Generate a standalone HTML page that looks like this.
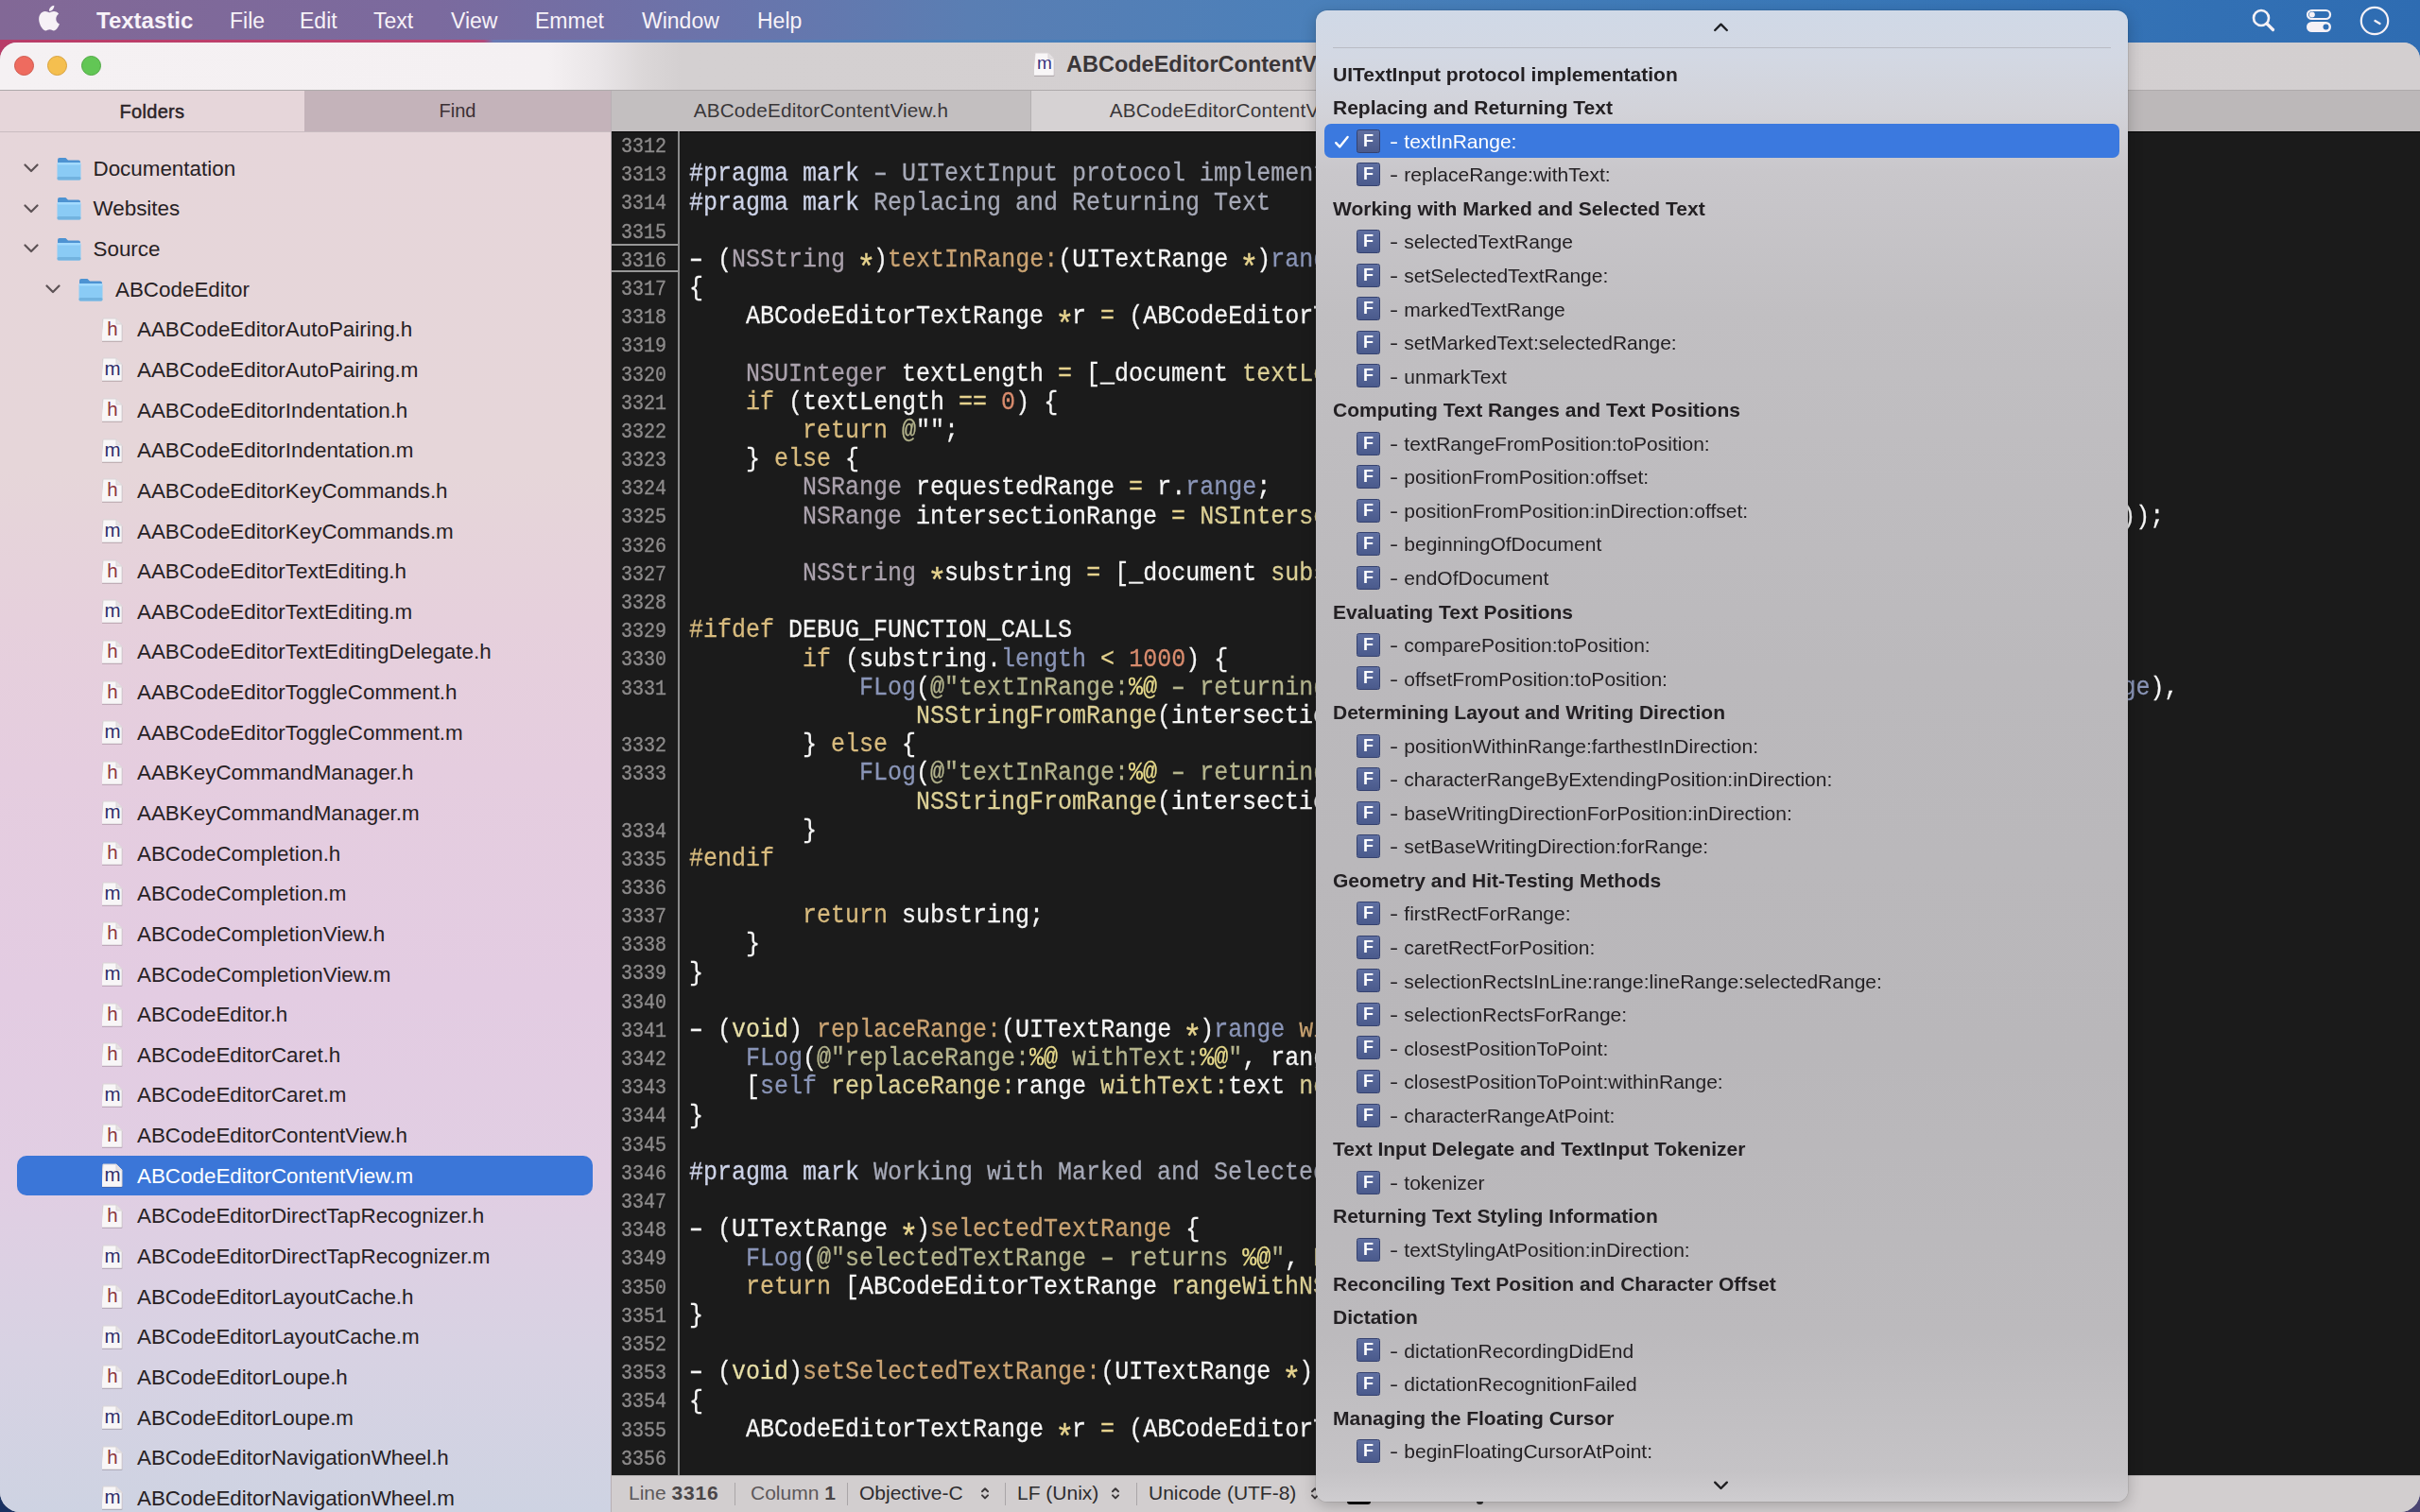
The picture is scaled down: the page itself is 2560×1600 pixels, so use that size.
<!DOCTYPE html><html><head><meta charset='utf-8'><style>
*{margin:0;padding:0;box-sizing:border-box}
html,body{width:2560px;height:1600px;overflow:hidden;background:linear-gradient(90deg,#1a3262,#4a4472)}
body{position:relative;font-family:"Liberation Sans", sans-serif}
.a{position:absolute}
.t{position:absolute;white-space:pre;line-height:1}
.mi{position:absolute;top:10.5px;font-size:23px;color:#f7f2f8;white-space:pre;line-height:1}
.tl{position:absolute;top:58.5px;width:21px;height:21px;border-radius:50%}
.rt{position:absolute;font-size:22.4px;color:#272124;white-space:pre;line-height:1}
.ln{position:absolute;left:647px;width:58px;text-align:right;font-family:"Liberation Mono", monospace;font-size:20px;color:#8e8c8c;white-space:pre;line-height:1;transform:scaleY(1.12);transform-origin:0 15.3px;-webkit-text-stroke:0.3px #8e8c8c}
.cl{position:absolute;left:729px;font-family:"Liberation Mono", monospace;font-size:25px;color:#f6f6f6;white-space:pre;line-height:1;transform:scaleY(1.08);transform-origin:0 19.15px;-webkit-text-stroke:0.25px currentColor}
.ast{font-style:normal;display:inline-block;transform:translateY(9.5px) scale(1.35)}
.hy{font-style:normal;display:inline-block;transform:scaleX(1.55)}
.ph{position:absolute;left:1410px;font-size:21px;font-weight:bold;color:#232023;white-space:pre;line-height:1}
.pi{position:absolute;left:1470px;font-size:21px;color:#242124;white-space:pre;line-height:1}
.fb{position:absolute;left:1435px;width:25px;height:25px;border-radius:2.5px;background:linear-gradient(180deg,#5f6fa1,#4a5a8c);border:1px solid #34416f;color:#fff;font-size:18px;font-weight:bold;text-align:center;line-height:23px}
</style></head><body>
<div class='a' style='left:0;top:0;width:2560px;height:70px;background:linear-gradient(90deg,#b83c68 0px,#c2426e 500px,#b04a7c 512px,#6a7ab4 522px,#4a80ba 1000px,#3f7ab9 1400px,#2f6db3 2560px)'></div>
<div class='a' style='left:0;top:0;width:2560px;height:41.5px;background:linear-gradient(90deg,#826896 0%,#7b6a9e 18%,#6a74ab 30%,#5a7eb3 40%,#4a80ba 55%,#3a78b8 75%,#2e6cb2 100%)'></div>
<svg class='a' style='left:38px;top:4px' width='26' height='30' viewBox='0 0 26 30'><path fill='#f6f1f6' d='M21.3 15.9c0-3.4 2.8-5 2.9-5.1-1.6-2.3-4-2.6-4.9-2.7-2.1-.2-4 1.2-5.1 1.2-1 0-2.7-1.2-4.4-1.2C7.5 8.2 5.4 9.5 4.3 11.5c-2.4 4.1-.6 10.2 1.7 13.5 1.1 1.6 2.5 3.5 4.2 3.4 1.7-.1 2.300-1.1 4.4-1.1 2 0 2.6 1.1 4.4 1.1 1.8 0 3-1.700 4.1-3.3 1.3-1.9 1.8-3.7 1.8-3.8 0 0-3.6-1.4-3.6-5.4zM17.9 5.9c.9-1.1 1.6-2.7 1.4-4.2-1.300.1-3 .9-3.9 2-.9 1-1.6 2.6-1.4 4.1 1.5.1 3-.8 3.9-1.9z'/></svg>
<div class='mi' style='left:102px;font-weight:bold;font-size:24px;top:9.5px;'>Textastic</div>
<div class='mi' style='left:243px;'>File</div>
<div class='mi' style='left:317px;'>Edit</div>
<div class='mi' style='left:395px;'>Text</div>
<div class='mi' style='left:477px;'>View</div>
<div class='mi' style='left:566px;'>Emmet</div>
<div class='mi' style='left:679px;'>Window</div>
<div class='mi' style='left:801px;'>Help</div>
<svg class='a' style='left:2380px;top:7px' width='30' height='30' viewBox='0 0 30 30'><circle cx='12' cy='12' r='8' fill='none' stroke='#f6f1f6' stroke-width='2.6'/><path d='M18 18L24.5 24.5' stroke='#f6f1f6' stroke-width='3.2' stroke-linecap='round'/></svg>
<svg class='a' style='left:2438px;top:8px' width='32' height='28' viewBox='0 0 32 28'><rect x='3' y='3' width='24' height='9' rx='4.5' fill='none' stroke='#f6f1f6' stroke-width='2.2'/><circle cx='7.8' cy='7.5' r='3' fill='#f6f1f6'/><rect x='2' y='15' width='26' height='11' rx='5.5' fill='#f6f1f6'/><circle cx='22.5' cy='20.5' r='3' fill='#2f6db3'/></svg>
<svg class='a' style='left:2495px;top:5px' width='34' height='34' viewBox='0 0 34 34'><circle cx='17' cy='17' r='14.2' fill='none' stroke='#f6f1f6' stroke-width='2.2'/><path d='M17.5 17L22.5 20' stroke='#f6f1f6' stroke-width='2.4' stroke-linecap='round'/></svg>
<div class='a' style='left:0;top:44.5px;width:2560px;height:1555.5px;border-radius:18px 18px 21px 21px;overflow:hidden;background:#d3cfd0'>
<div class='a' style='left:0;top:0;width:2560px;height:50px;background:linear-gradient(90deg,#f5f1f3 0px,#f4f0f2 580px,#e9e5e7 635px,#dbd7d8 680px,#d4d0d1 720px,#d3cfd0 2560px)'></div>
<div class='a' style='left:0;top:50px;width:2560px;height:1px;background:#aeaaab'></div>
<div class='a' style='left:0;top:51px;width:646px;height:1520px;background:linear-gradient(180deg,#e6d6da 0px,#e6d6d9 400px,#e6d0dc 560px,#e5cddf 720px,#e3cce2 950px,#e1cee3 1150px,#d8d2e3 1330px,#cdd3e2 1520px)'></div>
<div class='a' style='left:646px;top:51px;width:1px;height:1520px;background:#b8b0b4'></div>
<div class='a' style='left:322px;top:51px;width:324px;height:44px;background:#c4b3ba'></div>
<div class='a' style='left:0;top:94.5px;width:646px;height:1px;background:#c9bcc1'></div>
</div>
<div class='tl' style='left:14.5px;background:#ee6b5f;border:1px solid #d0574c'></div>
<div class='tl' style='left:50px;background:#f5bf4f;border:1px solid #d8a13b'></div>
<div class='tl' style='left:85.5px;background:#62c655;border:1px solid #4fa843'></div>
<svg class='a' style='left:1094px;top:55px;filter:drop-shadow(0 1px 0.6px rgba(60,40,50,.22))' width='22' height='25' viewBox='0 0 22 25'><path d='M1 1h14l6 6v17a1 1 0 0 1-1 1h-20a1 1 0 0 1-1-1z' fill='#f8f6f7' stroke='#d9d4d6' stroke-width='1'/><path d='M15 1v6h6' fill='#e6e2e4' stroke='#d9d4d6' stroke-width='1'/></svg><div class='t' style='left:1094px;width:22px;text-align:center;top:57px;font-size:19px;color:#3a3480'>m</div>
<div class='t' style='left:1128px;top:56.5px;font-size:23.5px;font-weight:bold;color:#3a3638'>ABCodeEditorContentView.m</div>
<div class='t' style='left:0;width:322px;text-align:center;top:107.5px;font-size:20px;letter-spacing:0.3px;-webkit-text-stroke:0.45px #2a2226;color:#2a2226'>Folders</div>
<div class='t' style='left:322px;width:324px;text-align:center;top:107px;font-size:20px;color:#3a3035'>Find</div>
<svg class='a' style='left:24.5px;top:173.2px' width='16' height='10' viewBox='0 0 16 10'><path d='M1.5 1.5L8 8l6.5-6.5' fill='none' stroke='#5c5255' stroke-width='2.2' stroke-linecap='round' stroke-linejoin='round'/></svg>
<svg class='a' style='left:60px;top:165.7px' width='26' height='25' viewBox='0 0 26 25'><path d='M1 3a2 2 0 0 1 2-2h6.5l2.5 2.5h11a2 2 0 0 1 2 2v3H1z' fill='#4d93d2'/><rect x='0.5' y='6' width='25' height='18.5' rx='2' fill='#8acbf5'/><rect x='0.5' y='6' width='25' height='2.5' rx='1' fill='#a3dbff'/><rect x='0.5' y='21' width='25' height='3.5' rx='1.5' fill='#72b3df'/></svg>
<div class='rt' style='left:98.5px;top:167.7px;color:#272124'>Documentation</div>
<svg class='a' style='left:24.5px;top:215.83999999999997px' width='16' height='10' viewBox='0 0 16 10'><path d='M1.5 1.5L8 8l6.5-6.5' fill='none' stroke='#5c5255' stroke-width='2.2' stroke-linecap='round' stroke-linejoin='round'/></svg>
<svg class='a' style='left:60px;top:208.33999999999997px' width='26' height='25' viewBox='0 0 26 25'><path d='M1 3a2 2 0 0 1 2-2h6.5l2.5 2.5h11a2 2 0 0 1 2 2v3H1z' fill='#4d93d2'/><rect x='0.5' y='6' width='25' height='18.5' rx='2' fill='#8acbf5'/><rect x='0.5' y='6' width='25' height='2.5' rx='1' fill='#a3dbff'/><rect x='0.5' y='21' width='25' height='3.5' rx='1.5' fill='#72b3df'/></svg>
<div class='rt' style='left:98.5px;top:210.3px;color:#272124'>Websites</div>
<svg class='a' style='left:24.5px;top:258.48px' width='16' height='10' viewBox='0 0 16 10'><path d='M1.5 1.5L8 8l6.5-6.5' fill='none' stroke='#5c5255' stroke-width='2.2' stroke-linecap='round' stroke-linejoin='round'/></svg>
<svg class='a' style='left:60px;top:250.98000000000002px' width='26' height='25' viewBox='0 0 26 25'><path d='M1 3a2 2 0 0 1 2-2h6.5l2.5 2.5h11a2 2 0 0 1 2 2v3H1z' fill='#4d93d2'/><rect x='0.5' y='6' width='25' height='18.5' rx='2' fill='#8acbf5'/><rect x='0.5' y='6' width='25' height='2.5' rx='1' fill='#a3dbff'/><rect x='0.5' y='21' width='25' height='3.5' rx='1.5' fill='#72b3df'/></svg>
<div class='rt' style='left:98.5px;top:253.0px;color:#272124'>Source</div>
<svg class='a' style='left:48.0px;top:301.12px' width='16' height='10' viewBox='0 0 16 10'><path d='M1.5 1.5L8 8l6.5-6.5' fill='none' stroke='#5c5255' stroke-width='2.2' stroke-linecap='round' stroke-linejoin='round'/></svg>
<svg class='a' style='left:83px;top:293.62px' width='26' height='25' viewBox='0 0 26 25'><path d='M1 3a2 2 0 0 1 2-2h6.5l2.5 2.5h11a2 2 0 0 1 2 2v3H1z' fill='#4d93d2'/><rect x='0.5' y='6' width='25' height='18.5' rx='2' fill='#8acbf5'/><rect x='0.5' y='6' width='25' height='2.5' rx='1' fill='#a3dbff'/><rect x='0.5' y='21' width='25' height='3.5' rx='1.5' fill='#72b3df'/></svg>
<div class='rt' style='left:122.0px;top:295.6px;color:#272124'>ABCodeEditor</div>
<svg class='a' style='left:108px;top:335.8px;filter:drop-shadow(0 1px 0.6px rgba(60,40,50,.22))' width='22' height='25' viewBox='0 0 22 25'><path d='M1 1h14l6 6v17a1 1 0 0 1-1 1h-20a1 1 0 0 1-1-1z' fill='#f8f6f7' stroke='#d9d4d6' stroke-width='1'/><path d='M15 1v6h6' fill='#e6e2e4' stroke='#d9d4d6' stroke-width='1'/></svg><div class='t' style='left:108px;width:22px;text-align:center;top:337.8px;font-size:20.5px;color:#8c3540'>h</div>
<div class='rt' style='left:145px;top:338.3px;color:#272124'>AABCodeEditorAutoPairing.h</div>
<svg class='a' style='left:108px;top:378.4px;filter:drop-shadow(0 1px 0.6px rgba(60,40,50,.22))' width='22' height='25' viewBox='0 0 22 25'><path d='M1 1h14l6 6v17a1 1 0 0 1-1 1h-20a1 1 0 0 1-1-1z' fill='#f8f6f7' stroke='#d9d4d6' stroke-width='1'/><path d='M15 1v6h6' fill='#e6e2e4' stroke='#d9d4d6' stroke-width='1'/></svg><div class='t' style='left:108px;width:22px;text-align:center;top:380.4px;font-size:20.5px;color:#2f2e6a'>m</div>
<div class='rt' style='left:145px;top:380.9px;color:#272124'>AABCodeEditorAutoPairing.m</div>
<svg class='a' style='left:108px;top:421.0px;filter:drop-shadow(0 1px 0.6px rgba(60,40,50,.22))' width='22' height='25' viewBox='0 0 22 25'><path d='M1 1h14l6 6v17a1 1 0 0 1-1 1h-20a1 1 0 0 1-1-1z' fill='#f8f6f7' stroke='#d9d4d6' stroke-width='1'/><path d='M15 1v6h6' fill='#e6e2e4' stroke='#d9d4d6' stroke-width='1'/></svg><div class='t' style='left:108px;width:22px;text-align:center;top:423.0px;font-size:20.5px;color:#8c3540'>h</div>
<div class='rt' style='left:145px;top:423.5px;color:#272124'>AABCodeEditorIndentation.h</div>
<svg class='a' style='left:108px;top:463.7px;filter:drop-shadow(0 1px 0.6px rgba(60,40,50,.22))' width='22' height='25' viewBox='0 0 22 25'><path d='M1 1h14l6 6v17a1 1 0 0 1-1 1h-20a1 1 0 0 1-1-1z' fill='#f8f6f7' stroke='#d9d4d6' stroke-width='1'/><path d='M15 1v6h6' fill='#e6e2e4' stroke='#d9d4d6' stroke-width='1'/></svg><div class='t' style='left:108px;width:22px;text-align:center;top:465.7px;font-size:20.5px;color:#2f2e6a'>m</div>
<div class='rt' style='left:145px;top:466.2px;color:#272124'>AABCodeEditorIndentation.m</div>
<svg class='a' style='left:108px;top:506.3px;filter:drop-shadow(0 1px 0.6px rgba(60,40,50,.22))' width='22' height='25' viewBox='0 0 22 25'><path d='M1 1h14l6 6v17a1 1 0 0 1-1 1h-20a1 1 0 0 1-1-1z' fill='#f8f6f7' stroke='#d9d4d6' stroke-width='1'/><path d='M15 1v6h6' fill='#e6e2e4' stroke='#d9d4d6' stroke-width='1'/></svg><div class='t' style='left:108px;width:22px;text-align:center;top:508.3px;font-size:20.5px;color:#8c3540'>h</div>
<div class='rt' style='left:145px;top:508.8px;color:#272124'>AABCodeEditorKeyCommands.h</div>
<svg class='a' style='left:108px;top:549.0px;filter:drop-shadow(0 1px 0.6px rgba(60,40,50,.22))' width='22' height='25' viewBox='0 0 22 25'><path d='M1 1h14l6 6v17a1 1 0 0 1-1 1h-20a1 1 0 0 1-1-1z' fill='#f8f6f7' stroke='#d9d4d6' stroke-width='1'/><path d='M15 1v6h6' fill='#e6e2e4' stroke='#d9d4d6' stroke-width='1'/></svg><div class='t' style='left:108px;width:22px;text-align:center;top:551.0px;font-size:20.5px;color:#2f2e6a'>m</div>
<div class='rt' style='left:145px;top:551.5px;color:#272124'>AABCodeEditorKeyCommands.m</div>
<svg class='a' style='left:108px;top:591.6px;filter:drop-shadow(0 1px 0.6px rgba(60,40,50,.22))' width='22' height='25' viewBox='0 0 22 25'><path d='M1 1h14l6 6v17a1 1 0 0 1-1 1h-20a1 1 0 0 1-1-1z' fill='#f8f6f7' stroke='#d9d4d6' stroke-width='1'/><path d='M15 1v6h6' fill='#e6e2e4' stroke='#d9d4d6' stroke-width='1'/></svg><div class='t' style='left:108px;width:22px;text-align:center;top:593.6px;font-size:20.5px;color:#8c3540'>h</div>
<div class='rt' style='left:145px;top:594.1px;color:#272124'>AABCodeEditorTextEditing.h</div>
<svg class='a' style='left:108px;top:634.2px;filter:drop-shadow(0 1px 0.6px rgba(60,40,50,.22))' width='22' height='25' viewBox='0 0 22 25'><path d='M1 1h14l6 6v17a1 1 0 0 1-1 1h-20a1 1 0 0 1-1-1z' fill='#f8f6f7' stroke='#d9d4d6' stroke-width='1'/><path d='M15 1v6h6' fill='#e6e2e4' stroke='#d9d4d6' stroke-width='1'/></svg><div class='t' style='left:108px;width:22px;text-align:center;top:636.2px;font-size:20.5px;color:#2f2e6a'>m</div>
<div class='rt' style='left:145px;top:636.7px;color:#272124'>AABCodeEditorTextEditing.m</div>
<svg class='a' style='left:108px;top:676.9px;filter:drop-shadow(0 1px 0.6px rgba(60,40,50,.22))' width='22' height='25' viewBox='0 0 22 25'><path d='M1 1h14l6 6v17a1 1 0 0 1-1 1h-20a1 1 0 0 1-1-1z' fill='#f8f6f7' stroke='#d9d4d6' stroke-width='1'/><path d='M15 1v6h6' fill='#e6e2e4' stroke='#d9d4d6' stroke-width='1'/></svg><div class='t' style='left:108px;width:22px;text-align:center;top:678.9px;font-size:20.5px;color:#8c3540'>h</div>
<div class='rt' style='left:145px;top:679.4px;color:#272124'>AABCodeEditorTextEditingDelegate.h</div>
<svg class='a' style='left:108px;top:719.5px;filter:drop-shadow(0 1px 0.6px rgba(60,40,50,.22))' width='22' height='25' viewBox='0 0 22 25'><path d='M1 1h14l6 6v17a1 1 0 0 1-1 1h-20a1 1 0 0 1-1-1z' fill='#f8f6f7' stroke='#d9d4d6' stroke-width='1'/><path d='M15 1v6h6' fill='#e6e2e4' stroke='#d9d4d6' stroke-width='1'/></svg><div class='t' style='left:108px;width:22px;text-align:center;top:721.5px;font-size:20.5px;color:#8c3540'>h</div>
<div class='rt' style='left:145px;top:722.0px;color:#272124'>AABCodeEditorToggleComment.h</div>
<svg class='a' style='left:108px;top:762.2px;filter:drop-shadow(0 1px 0.6px rgba(60,40,50,.22))' width='22' height='25' viewBox='0 0 22 25'><path d='M1 1h14l6 6v17a1 1 0 0 1-1 1h-20a1 1 0 0 1-1-1z' fill='#f8f6f7' stroke='#d9d4d6' stroke-width='1'/><path d='M15 1v6h6' fill='#e6e2e4' stroke='#d9d4d6' stroke-width='1'/></svg><div class='t' style='left:108px;width:22px;text-align:center;top:764.2px;font-size:20.5px;color:#2f2e6a'>m</div>
<div class='rt' style='left:145px;top:764.7px;color:#272124'>AABCodeEditorToggleComment.m</div>
<svg class='a' style='left:108px;top:804.8px;filter:drop-shadow(0 1px 0.6px rgba(60,40,50,.22))' width='22' height='25' viewBox='0 0 22 25'><path d='M1 1h14l6 6v17a1 1 0 0 1-1 1h-20a1 1 0 0 1-1-1z' fill='#f8f6f7' stroke='#d9d4d6' stroke-width='1'/><path d='M15 1v6h6' fill='#e6e2e4' stroke='#d9d4d6' stroke-width='1'/></svg><div class='t' style='left:108px;width:22px;text-align:center;top:806.8px;font-size:20.5px;color:#8c3540'>h</div>
<div class='rt' style='left:145px;top:807.3px;color:#272124'>AABKeyCommandManager.h</div>
<svg class='a' style='left:108px;top:847.4px;filter:drop-shadow(0 1px 0.6px rgba(60,40,50,.22))' width='22' height='25' viewBox='0 0 22 25'><path d='M1 1h14l6 6v17a1 1 0 0 1-1 1h-20a1 1 0 0 1-1-1z' fill='#f8f6f7' stroke='#d9d4d6' stroke-width='1'/><path d='M15 1v6h6' fill='#e6e2e4' stroke='#d9d4d6' stroke-width='1'/></svg><div class='t' style='left:108px;width:22px;text-align:center;top:849.4px;font-size:20.5px;color:#2f2e6a'>m</div>
<div class='rt' style='left:145px;top:849.9px;color:#272124'>AABKeyCommandManager.m</div>
<svg class='a' style='left:108px;top:890.1px;filter:drop-shadow(0 1px 0.6px rgba(60,40,50,.22))' width='22' height='25' viewBox='0 0 22 25'><path d='M1 1h14l6 6v17a1 1 0 0 1-1 1h-20a1 1 0 0 1-1-1z' fill='#f8f6f7' stroke='#d9d4d6' stroke-width='1'/><path d='M15 1v6h6' fill='#e6e2e4' stroke='#d9d4d6' stroke-width='1'/></svg><div class='t' style='left:108px;width:22px;text-align:center;top:892.1px;font-size:20.5px;color:#8c3540'>h</div>
<div class='rt' style='left:145px;top:892.6px;color:#272124'>ABCodeCompletion.h</div>
<svg class='a' style='left:108px;top:932.7px;filter:drop-shadow(0 1px 0.6px rgba(60,40,50,.22))' width='22' height='25' viewBox='0 0 22 25'><path d='M1 1h14l6 6v17a1 1 0 0 1-1 1h-20a1 1 0 0 1-1-1z' fill='#f8f6f7' stroke='#d9d4d6' stroke-width='1'/><path d='M15 1v6h6' fill='#e6e2e4' stroke='#d9d4d6' stroke-width='1'/></svg><div class='t' style='left:108px;width:22px;text-align:center;top:934.7px;font-size:20.5px;color:#2f2e6a'>m</div>
<div class='rt' style='left:145px;top:935.2px;color:#272124'>ABCodeCompletion.m</div>
<svg class='a' style='left:108px;top:975.4px;filter:drop-shadow(0 1px 0.6px rgba(60,40,50,.22))' width='22' height='25' viewBox='0 0 22 25'><path d='M1 1h14l6 6v17a1 1 0 0 1-1 1h-20a1 1 0 0 1-1-1z' fill='#f8f6f7' stroke='#d9d4d6' stroke-width='1'/><path d='M15 1v6h6' fill='#e6e2e4' stroke='#d9d4d6' stroke-width='1'/></svg><div class='t' style='left:108px;width:22px;text-align:center;top:977.4px;font-size:20.5px;color:#8c3540'>h</div>
<div class='rt' style='left:145px;top:977.9px;color:#272124'>ABCodeCompletionView.h</div>
<svg class='a' style='left:108px;top:1018.0px;filter:drop-shadow(0 1px 0.6px rgba(60,40,50,.22))' width='22' height='25' viewBox='0 0 22 25'><path d='M1 1h14l6 6v17a1 1 0 0 1-1 1h-20a1 1 0 0 1-1-1z' fill='#f8f6f7' stroke='#d9d4d6' stroke-width='1'/><path d='M15 1v6h6' fill='#e6e2e4' stroke='#d9d4d6' stroke-width='1'/></svg><div class='t' style='left:108px;width:22px;text-align:center;top:1020.0px;font-size:20.5px;color:#2f2e6a'>m</div>
<div class='rt' style='left:145px;top:1020.5px;color:#272124'>ABCodeCompletionView.m</div>
<svg class='a' style='left:108px;top:1060.6px;filter:drop-shadow(0 1px 0.6px rgba(60,40,50,.22))' width='22' height='25' viewBox='0 0 22 25'><path d='M1 1h14l6 6v17a1 1 0 0 1-1 1h-20a1 1 0 0 1-1-1z' fill='#f8f6f7' stroke='#d9d4d6' stroke-width='1'/><path d='M15 1v6h6' fill='#e6e2e4' stroke='#d9d4d6' stroke-width='1'/></svg><div class='t' style='left:108px;width:22px;text-align:center;top:1062.6px;font-size:20.5px;color:#8c3540'>h</div>
<div class='rt' style='left:145px;top:1063.1px;color:#272124'>ABCodeEditor.h</div>
<svg class='a' style='left:108px;top:1103.3px;filter:drop-shadow(0 1px 0.6px rgba(60,40,50,.22))' width='22' height='25' viewBox='0 0 22 25'><path d='M1 1h14l6 6v17a1 1 0 0 1-1 1h-20a1 1 0 0 1-1-1z' fill='#f8f6f7' stroke='#d9d4d6' stroke-width='1'/><path d='M15 1v6h6' fill='#e6e2e4' stroke='#d9d4d6' stroke-width='1'/></svg><div class='t' style='left:108px;width:22px;text-align:center;top:1105.3px;font-size:20.5px;color:#8c3540'>h</div>
<div class='rt' style='left:145px;top:1105.8px;color:#272124'>ABCodeEditorCaret.h</div>
<svg class='a' style='left:108px;top:1145.9px;filter:drop-shadow(0 1px 0.6px rgba(60,40,50,.22))' width='22' height='25' viewBox='0 0 22 25'><path d='M1 1h14l6 6v17a1 1 0 0 1-1 1h-20a1 1 0 0 1-1-1z' fill='#f8f6f7' stroke='#d9d4d6' stroke-width='1'/><path d='M15 1v6h6' fill='#e6e2e4' stroke='#d9d4d6' stroke-width='1'/></svg><div class='t' style='left:108px;width:22px;text-align:center;top:1147.9px;font-size:20.5px;color:#2f2e6a'>m</div>
<div class='rt' style='left:145px;top:1148.4px;color:#272124'>ABCodeEditorCaret.m</div>
<svg class='a' style='left:108px;top:1188.6px;filter:drop-shadow(0 1px 0.6px rgba(60,40,50,.22))' width='22' height='25' viewBox='0 0 22 25'><path d='M1 1h14l6 6v17a1 1 0 0 1-1 1h-20a1 1 0 0 1-1-1z' fill='#f8f6f7' stroke='#d9d4d6' stroke-width='1'/><path d='M15 1v6h6' fill='#e6e2e4' stroke='#d9d4d6' stroke-width='1'/></svg><div class='t' style='left:108px;width:22px;text-align:center;top:1190.6px;font-size:20.5px;color:#8c3540'>h</div>
<div class='rt' style='left:145px;top:1191.1px;color:#272124'>ABCodeEditorContentView.h</div>
<div class='a' style='left:18px;top:1222.5px;width:609px;height:42.5px;border-radius:10px;background:#3b76d8'></div>
<svg class='a' style='left:108px;top:1231.2px;filter:drop-shadow(0 1px 0.6px rgba(60,40,50,.22))' width='22' height='25' viewBox='0 0 22 25'><path d='M1 1h14l6 6v17a1 1 0 0 1-1 1h-20a1 1 0 0 1-1-1z' fill='#f8f6f7' stroke='#d9d4d6' stroke-width='1'/><path d='M15 1v6h6' fill='#e6e2e4' stroke='#d9d4d6' stroke-width='1'/></svg><div class='t' style='left:108px;width:22px;text-align:center;top:1233.2px;font-size:20.5px;color:#2f2e6a'>m</div>
<div class='rt' style='left:145px;top:1233.7px;color:#ffffff'>ABCodeEditorContentView.m</div>
<svg class='a' style='left:108px;top:1273.8px;filter:drop-shadow(0 1px 0.6px rgba(60,40,50,.22))' width='22' height='25' viewBox='0 0 22 25'><path d='M1 1h14l6 6v17a1 1 0 0 1-1 1h-20a1 1 0 0 1-1-1z' fill='#f8f6f7' stroke='#d9d4d6' stroke-width='1'/><path d='M15 1v6h6' fill='#e6e2e4' stroke='#d9d4d6' stroke-width='1'/></svg><div class='t' style='left:108px;width:22px;text-align:center;top:1275.8px;font-size:20.5px;color:#8c3540'>h</div>
<div class='rt' style='left:145px;top:1276.3px;color:#272124'>ABCodeEditorDirectTapRecognizer.h</div>
<svg class='a' style='left:108px;top:1316.5px;filter:drop-shadow(0 1px 0.6px rgba(60,40,50,.22))' width='22' height='25' viewBox='0 0 22 25'><path d='M1 1h14l6 6v17a1 1 0 0 1-1 1h-20a1 1 0 0 1-1-1z' fill='#f8f6f7' stroke='#d9d4d6' stroke-width='1'/><path d='M15 1v6h6' fill='#e6e2e4' stroke='#d9d4d6' stroke-width='1'/></svg><div class='t' style='left:108px;width:22px;text-align:center;top:1318.5px;font-size:20.5px;color:#2f2e6a'>m</div>
<div class='rt' style='left:145px;top:1319.0px;color:#272124'>ABCodeEditorDirectTapRecognizer.m</div>
<svg class='a' style='left:108px;top:1359.1px;filter:drop-shadow(0 1px 0.6px rgba(60,40,50,.22))' width='22' height='25' viewBox='0 0 22 25'><path d='M1 1h14l6 6v17a1 1 0 0 1-1 1h-20a1 1 0 0 1-1-1z' fill='#f8f6f7' stroke='#d9d4d6' stroke-width='1'/><path d='M15 1v6h6' fill='#e6e2e4' stroke='#d9d4d6' stroke-width='1'/></svg><div class='t' style='left:108px;width:22px;text-align:center;top:1361.1px;font-size:20.5px;color:#8c3540'>h</div>
<div class='rt' style='left:145px;top:1361.6px;color:#272124'>ABCodeEditorLayoutCache.h</div>
<svg class='a' style='left:108px;top:1401.8px;filter:drop-shadow(0 1px 0.6px rgba(60,40,50,.22))' width='22' height='25' viewBox='0 0 22 25'><path d='M1 1h14l6 6v17a1 1 0 0 1-1 1h-20a1 1 0 0 1-1-1z' fill='#f8f6f7' stroke='#d9d4d6' stroke-width='1'/><path d='M15 1v6h6' fill='#e6e2e4' stroke='#d9d4d6' stroke-width='1'/></svg><div class='t' style='left:108px;width:22px;text-align:center;top:1403.8px;font-size:20.5px;color:#2f2e6a'>m</div>
<div class='rt' style='left:145px;top:1404.3px;color:#272124'>ABCodeEditorLayoutCache.m</div>
<svg class='a' style='left:108px;top:1444.4px;filter:drop-shadow(0 1px 0.6px rgba(60,40,50,.22))' width='22' height='25' viewBox='0 0 22 25'><path d='M1 1h14l6 6v17a1 1 0 0 1-1 1h-20a1 1 0 0 1-1-1z' fill='#f8f6f7' stroke='#d9d4d6' stroke-width='1'/><path d='M15 1v6h6' fill='#e6e2e4' stroke='#d9d4d6' stroke-width='1'/></svg><div class='t' style='left:108px;width:22px;text-align:center;top:1446.4px;font-size:20.5px;color:#8c3540'>h</div>
<div class='rt' style='left:145px;top:1446.9px;color:#272124'>ABCodeEditorLoupe.h</div>
<svg class='a' style='left:108px;top:1487.0px;filter:drop-shadow(0 1px 0.6px rgba(60,40,50,.22))' width='22' height='25' viewBox='0 0 22 25'><path d='M1 1h14l6 6v17a1 1 0 0 1-1 1h-20a1 1 0 0 1-1-1z' fill='#f8f6f7' stroke='#d9d4d6' stroke-width='1'/><path d='M15 1v6h6' fill='#e6e2e4' stroke='#d9d4d6' stroke-width='1'/></svg><div class='t' style='left:108px;width:22px;text-align:center;top:1489.0px;font-size:20.5px;color:#2f2e6a'>m</div>
<div class='rt' style='left:145px;top:1489.5px;color:#272124'>ABCodeEditorLoupe.m</div>
<svg class='a' style='left:108px;top:1529.7px;filter:drop-shadow(0 1px 0.6px rgba(60,40,50,.22))' width='22' height='25' viewBox='0 0 22 25'><path d='M1 1h14l6 6v17a1 1 0 0 1-1 1h-20a1 1 0 0 1-1-1z' fill='#f8f6f7' stroke='#d9d4d6' stroke-width='1'/><path d='M15 1v6h6' fill='#e6e2e4' stroke='#d9d4d6' stroke-width='1'/></svg><div class='t' style='left:108px;width:22px;text-align:center;top:1531.7px;font-size:20.5px;color:#8c3540'>h</div>
<div class='rt' style='left:145px;top:1532.2px;color:#272124'>ABCodeEditorNavigationWheel.h</div>
<svg class='a' style='left:108px;top:1572.3px;filter:drop-shadow(0 1px 0.6px rgba(60,40,50,.22))' width='22' height='25' viewBox='0 0 22 25'><path d='M1 1h14l6 6v17a1 1 0 0 1-1 1h-20a1 1 0 0 1-1-1z' fill='#f8f6f7' stroke='#d9d4d6' stroke-width='1'/><path d='M15 1v6h6' fill='#e6e2e4' stroke='#d9d4d6' stroke-width='1'/></svg><div class='t' style='left:108px;width:22px;text-align:center;top:1574.3px;font-size:20.5px;color:#2f2e6a'>m</div>
<div class='rt' style='left:145px;top:1574.8px;color:#272124'>ABCodeEditorNavigationWheel.m</div>
<div class='a' style='left:647px;top:139px;width:1913px;height:1422px;background:#1b1b1b'></div>
<div class='a' style='left:647px;top:95.5px;width:1913px;height:43.5px;background:#bcb8b9'></div>
<div class='a' style='left:647px;top:95.5px;width:443px;height:43.5px;background:#c3bfc0'></div>
<div class='a' style='left:1090px;top:95.5px;width:443px;height:43.5px;background:#d6d2d3;border-left:1px solid #b4b0b1'></div>
<div class='t' style='left:647px;width:443px;text-align:center;top:106.5px;font-size:20.7px;letter-spacing:0.22px;color:#3a3739'>ABCodeEditorContentView.h</div>
<div class='t' style='left:1090px;width:443px;text-align:center;top:106.5px;font-size:20.7px;letter-spacing:0.22px;color:#3a3739'>ABCodeEditorContentView.m</div>
<div class='a' style='left:647px;top:138.5px;width:1913px;height:1.5px;background:#050505'></div>
<div class='a' style='left:717px;top:139px;width:2px;height:1422px;background:#8a8a8a'></div>
<div class='a' style='left:647px;top:139px;width:745px;height:1422px;overflow:hidden'>
</div>
<div class='ln' style='top:145.98px'>3312</div>
<div class='ln' style='top:176.17px'>3313</div>
<div class='cl' style='top:172.33px'><span style='color:#cdd3e8'>#pragma mark</span> <span style='color:#a6a9b7'><i class='hy'>-</i> UITextInput protocol implementation</span></div>
<div class='ln' style='top:206.36px'>3314</div>
<div class='cl' style='top:202.52px'><span style='color:#cdd3e8'>#pragma mark</span> <span style='color:#a6a9b7'>Replacing and Returning Text</span></div>
<div class='ln' style='top:236.55px'>3315</div>
<div class='ln' style='top:266.74px'>3316</div>
<div class='cl' style='top:262.90px'><i class='hy'>-</i> (<span style='color:#aaa1ac'>NSString</span> <span style='color:#e6d38e'><i class='ast'>*</i></span>)<span style='color:#caa372'>textInRange:</span>(UITextRange <span style='color:#e6d38e'><i class='ast'>*</i></span>)<span style='color:#8a95b7'>range</span></div>
<div class='ln' style='top:296.93px'>3317</div>
<div class='cl' style='top:293.09px'>{</div>
<div class='ln' style='top:327.12px'>3318</div>
<div class='cl' style='top:323.28px'>    ABCodeEditorTextRange <span style='color:#e6d38e'><i class='ast'>*</i></span>r <span style='color:#e6d38e'>=</span> (ABCodeEditorTextRange <span style='color:#e6d38e'><i class='ast'>*</i></span>)<span style='color:#8a95b7'>range</span>;</div>
<div class='ln' style='top:357.31px'>3319</div>
<div class='ln' style='top:387.50px'>3320</div>
<div class='cl' style='top:383.66px'>    <span style='color:#aaa1ac'>NSUInteger</span> textLength <span style='color:#e6d38e'>=</span> [_document <span style='color:#dcd096'>textLength</span>];</div>
<div class='ln' style='top:417.69px'>3321</div>
<div class='cl' style='top:413.85px'>    <span style='color:#d8bb7e'>if</span> (textLength <span style='color:#e6d38e'>==</span> <span style='color:#d88b6d'>0</span>) {</div>
<div class='ln' style='top:447.88px'>3322</div>
<div class='cl' style='top:444.04px'>        <span style='color:#d8bb7e'>return</span> <span style='color:#b4b48d'>@</span>&quot;&quot;;</div>
<div class='ln' style='top:478.07px'>3323</div>
<div class='cl' style='top:474.23px'>    } <span style='color:#d8bb7e'>else</span> {</div>
<div class='ln' style='top:508.26px'>3324</div>
<div class='cl' style='top:504.42px'>        <span style='color:#aaa1ac'>NSRange</span> requestedRange <span style='color:#e6d38e'>=</span> r.<span style='color:#8a95b7'>range</span>;</div>
<div class='ln' style='top:538.44px'>3325</div>
<div class='cl' style='top:534.61px'>        <span style='color:#aaa1ac'>NSRange</span> intersectionRange <span style='color:#e6d38e'>=</span> <span style='color:#dcd096'>NSIntersectionRange</span>(requestedRange,     <span style='color:#dcd096'>NSMakeRange</span>(<span style='color:#d88b6d'>0</span>, textLength));</div>
<div class='ln' style='top:568.63px'>3326</div>
<div class='ln' style='top:598.83px'>3327</div>
<div class='cl' style='top:594.99px'>        <span style='color:#aaa1ac'>NSString</span> <span style='color:#e6d38e'><i class='ast'>*</i></span>substring <span style='color:#e6d38e'>=</span> [_document <span style='color:#dcd096'>substringWithRange:</span>intersectionRange];</div>
<div class='ln' style='top:629.01px'>3328</div>
<div class='ln' style='top:659.20px'>3329</div>
<div class='cl' style='top:655.37px'><span style='color:#d8bb7e'>#ifdef</span> DEBUG_FUNCTION_CALLS</div>
<div class='ln' style='top:689.39px'>3330</div>
<div class='cl' style='top:685.56px'>        <span style='color:#d8bb7e'>if</span> (substring.<span style='color:#8a95b7'>length</span> <span style='color:#e6d38e'>&lt;</span> <span style='color:#d88b6d'>1000</span>) {</div>
<div class='ln' style='top:719.59px'>3331</div>
<div class='cl' style='top:715.75px'>            <span style='color:#8a95b7'>FLog</span>(<span style='color:#b4b48d'>@&quot;textInRange:</span><span style='color:#e7da8b'>%@</span><span style='color:#b4b48d'> <i class='hy'>-</i> returning &#x27;</span><span style='color:#e7da8b'>%@</span><span style='color:#b4b48d'>&#x27; (range: </span><span style='color:#e7da8b'>%@</span><span style='color:#b4b48d'>)&quot;</span>, <span style='color:#8a95b7'>self</span>,        <span style='color:#dcd096'>NSStringFromRange</span>(r.<span style='color:#8a95b7'>range</span>),</div>
<div class='cl' style='top:745.94px'>                <span style='color:#dcd096'>NSStringFromRange</span>(intersectionRange), substring);</div>
<div class='ln' style='top:779.96px'>3332</div>
<div class='cl' style='top:776.13px'>        } <span style='color:#d8bb7e'>else</span> {</div>
<div class='ln' style='top:810.15px'>3333</div>
<div class='cl' style='top:806.32px'>            <span style='color:#8a95b7'>FLog</span>(<span style='color:#b4b48d'>@&quot;textInRange:</span><span style='color:#e7da8b'>%@</span><span style='color:#b4b48d'> <i class='hy'>-</i> returning &#x27;</span><span style='color:#e7da8b'>%@</span><span style='color:#b4b48d'>...&#x27; (range: </span><span style='color:#e7da8b'>%@</span><span style='color:#b4b48d'>)&quot;</span>, <span style='color:#8a95b7'>self</span>,</div>
<div class='cl' style='top:836.51px'>                <span style='color:#dcd096'>NSStringFromRange</span>(intersectionRange), [substring <span style='color:#dcd096'>substringToIndex:</span><span style='color:#d88b6d'>1000</span>]);</div>
<div class='ln' style='top:870.54px'>3334</div>
<div class='cl' style='top:866.70px'>        }</div>
<div class='ln' style='top:900.72px'>3335</div>
<div class='cl' style='top:896.89px'><span style='color:#d8bb7e'>#endif</span></div>
<div class='ln' style='top:930.91px'>3336</div>
<div class='ln' style='top:961.11px'>3337</div>
<div class='cl' style='top:957.27px'>        <span style='color:#d8bb7e'>return</span> substring;</div>
<div class='ln' style='top:991.30px'>3338</div>
<div class='cl' style='top:987.46px'>    }</div>
<div class='ln' style='top:1021.48px'>3339</div>
<div class='cl' style='top:1017.65px'>}</div>
<div class='ln' style='top:1051.67px'>3340</div>
<div class='ln' style='top:1081.87px'>3341</div>
<div class='cl' style='top:1078.03px'><i class='hy'>-</i> (<span style='color:#e6dea6'>void</span>) <span style='color:#caa372'>replaceRange:</span>(UITextRange <span style='color:#e6d38e'><i class='ast'>*</i></span>)<span style='color:#8a95b7'>range</span> <span style='color:#caa372'>withText:</span>(<span style='color:#aaa1ac'>NSString</span> <span style='color:#e6d38e'><i class='ast'>*</i></span>)<span style='color:#8a95b7'>text</span></div>
<div class='ln' style='top:1112.06px'>3342</div>
<div class='cl' style='top:1108.22px'>    <span style='color:#8a95b7'>FLog</span>(<span style='color:#b4b48d'>@&quot;replaceRange:</span><span style='color:#e7da8b'>%@</span><span style='color:#b4b48d'> withText:</span><span style='color:#e7da8b'>%@</span><span style='color:#b4b48d'>&quot;</span>, range, text);</div>
<div class='ln' style='top:1142.25px'>3343</div>
<div class='cl' style='top:1138.41px'>    [<span style='color:#8a95b7'>self</span> <span style='color:#dcd096'>replaceRange:</span>range <span style='color:#dcd096'>withText:</span>text <span style='color:#dcd096'>notifyInputDelegate:</span><span style='color:#d88b6d'>YES</span>];</div>
<div class='ln' style='top:1172.43px'>3344</div>
<div class='cl' style='top:1168.60px'>}</div>
<div class='ln' style='top:1202.62px'>3345</div>
<div class='ln' style='top:1232.82px'>3346</div>
<div class='cl' style='top:1228.98px'><span style='color:#cdd3e8'>#pragma mark</span> <span style='color:#a6a9b7'>Working with Marked and Selected Text</span></div>
<div class='ln' style='top:1263.00px'>3347</div>
<div class='ln' style='top:1293.19px'>3348</div>
<div class='cl' style='top:1289.36px'><i class='hy'>-</i> (UITextRange <span style='color:#e6d38e'><i class='ast'>*</i></span>)<span style='color:#caa372'>selectedTextRange</span> {</div>
<div class='ln' style='top:1323.38px'>3349</div>
<div class='cl' style='top:1319.55px'>    <span style='color:#8a95b7'>FLog</span>(<span style='color:#b4b48d'>@&quot;selectedTextRange <i class='hy'>-</i> returns </span><span style='color:#e7da8b'>%@</span><span style='color:#b4b48d'>&quot;</span>, <span style='color:#dcd096'>NSStringFromRange</span>(_selectedRange));</div>
<div class='ln' style='top:1353.58px'>3350</div>
<div class='cl' style='top:1349.74px'>    <span style='color:#d8bb7e'>return</span> [ABCodeEditorTextRange <span style='color:#dcd096'>rangeWithNSRange:</span>_selectedRange];</div>
<div class='ln' style='top:1383.76px'>3351</div>
<div class='cl' style='top:1379.93px'>}</div>
<div class='ln' style='top:1413.95px'>3352</div>
<div class='ln' style='top:1444.14px'>3353</div>
<div class='cl' style='top:1440.31px'><i class='hy'>-</i> (<span style='color:#e6dea6'>void</span>)<span style='color:#caa372'>setSelectedTextRange:</span>(UITextRange <span style='color:#e6d38e'><i class='ast'>*</i></span>)<span style='color:#8a95b7'>range</span></div>
<div class='ln' style='top:1474.34px'>3354</div>
<div class='cl' style='top:1470.50px'>{</div>
<div class='ln' style='top:1504.52px'>3355</div>
<div class='cl' style='top:1500.69px'>    ABCodeEditorTextRange <span style='color:#e6d38e'><i class='ast'>*</i></span>r <span style='color:#e6d38e'>=</span> (ABCodeEditorTextRange <span style='color:#e6d38e'><i class='ast'>*</i></span>)<span style='color:#8a95b7'>range</span>;</div>
<div class='ln' style='top:1534.71px'>3356</div>
<div class='a' style='left:647px;top:257.5px;width:70px;height:2px;background:#979797'></div>
<div class='a' style='left:647px;top:286px;width:70px;height:2px;background:#979797'></div>
<div class='a' style='left:647px;top:1561px;width:1913px;height:39px;background:#d2cecf;border-top:1px solid #b4b0b1;border-bottom-right-radius:21px'></div>
<div class='t' style='left:665px;top:1569.22px;font-size:21px;color:#5c585a'>Line <b style='color:#4a4648;letter-spacing:0.8px'>3316</b></div>
<div class='t' style='left:794px;top:1569.22px;font-size:21px;color:#5c585a'>Column <b style='color:#4a4648'>1</b></div>
<div class='t' style='left:909px;top:1569.22px;font-size:21px;color:#2e2c2e'>Objective-C</div>
<div class='t' style='left:1076px;top:1569.22px;font-size:21px;color:#2e2c2e'>LF (Unix)</div>
<div class='t' style='left:1215px;top:1569.22px;font-size:21px;color:#2e2c2e'>Unicode (UTF-8)</div>
<div class='a' style='left:777px;top:1569px;width:1px;height:24px;background:#aaa6a8'></div>
<div class='a' style='left:896px;top:1569px;width:1px;height:24px;background:#aaa6a8'></div>
<div class='a' style='left:1063px;top:1569px;width:1px;height:24px;background:#aaa6a8'></div>
<div class='a' style='left:1202px;top:1569px;width:1px;height:24px;background:#aaa6a8'></div>
<svg class='a' style='left:1037px;top:1572px' width='10' height='16' viewBox='0 0 10 16'><path d='M2 6.2L5 3.2L8 6.2M2 10.4L5 13.4L8 10.4' fill='none' stroke='#3a3638' stroke-width='2' stroke-linecap='round' stroke-linejoin='round'/></svg>
<svg class='a' style='left:1175px;top:1572px' width='10' height='16' viewBox='0 0 10 16'><path d='M2 6.2L5 3.2L8 6.2M2 10.4L5 13.4L8 10.4' fill='none' stroke='#3a3638' stroke-width='2' stroke-linecap='round' stroke-linejoin='round'/></svg>
<svg class='a' style='left:1386px;top:1572px' width='10' height='16' viewBox='0 0 10 16'><path d='M2 6.2L5 3.2L8 6.2M2 10.4L5 13.4L8 10.4' fill='none' stroke='#3a3638' stroke-width='2' stroke-linecap='round' stroke-linejoin='round'/></svg>
<div class='a' style='left:1425px;top:1574px;width:25px;height:18px;border-radius:3px;background:#111'></div>
<div class='a' style='left:1562px;top:1584px;width:7px;height:8px;border-radius:3px;background:#333'></div>
<div class='a' style='left:1392px;top:11px;width:859px;height:1578px;border-radius:12px;background:linear-gradient(180deg,#d0d9e7 0px,#d3d8e3 50px,#d2d2d8 110px,#c9c7cb 170px,#c1bfc2 320px,#bbb9bc 700px,#b9b7ba 1100px,#bcbabd 1400px,#c5c3c6 1545px,#cfcdd0 1579px);box-shadow:0 4px 16px rgba(0,0,0,.22),0 0 0 1px rgba(0,0,0,.07)'></div>
<svg class='a' style='left:1811.5px;top:22.4px' width='17' height='12' viewBox='0 0 17 12'><path d='M2.2 10L8.5 3.7L14.8 10' fill='none' stroke='#1e2024' stroke-width='2.4' stroke-linecap='round' stroke-linejoin='round'/></svg>
<div class='a' style='left:1410px;top:50px;width:823px;height:1px;background:#b9bcc4'></div>
<div class='ph' style='top:67.72px'>UITextInput protocol implementation</div>
<div class='ph' style='top:103.27px'>Replacing and Returning Text</div>
<div class='a' style='left:1401px;top:131.40px;width:841px;height:35.4px;border-radius:7px;background:#3b79df'></div>
<svg class='a' style='left:1410px;top:141.60px' width='19' height='16' viewBox='0 0 19 16'><path d='M3.2 9.2l4 4.2L15.6 2.9' fill='none' stroke='#fff' stroke-width='2.4' stroke-linecap='round' stroke-linejoin='round'/></svg>
<div class='fb' style='top:136.60px'>F</div>
<div class='pi' style='top:138.82px;color:#ffffff'><i style='font-style:normal;display:inline-block;transform:translateX(1px) scaleX(1.3)'>-</i><span style='margin-left:2.5px'> textInRange:</span></div>
<div class='fb' style='top:172.15px'>F</div>
<div class='pi' style='top:174.37px;color:#242124'><i style='font-style:normal;display:inline-block;transform:translateX(1px) scaleX(1.3)'>-</i><span style='margin-left:2.5px'> replaceRange:withText:</span></div>
<div class='ph' style='top:209.92px'>Working with Marked and Selected Text</div>
<div class='fb' style='top:243.25px'>F</div>
<div class='pi' style='top:245.47px;color:#242124'><i style='font-style:normal;display:inline-block;transform:translateX(1px) scaleX(1.3)'>-</i><span style='margin-left:2.5px'> selectedTextRange</span></div>
<div class='fb' style='top:278.80px'>F</div>
<div class='pi' style='top:281.02px;color:#242124'><i style='font-style:normal;display:inline-block;transform:translateX(1px) scaleX(1.3)'>-</i><span style='margin-left:2.5px'> setSelectedTextRange:</span></div>
<div class='fb' style='top:314.35px'>F</div>
<div class='pi' style='top:316.57px;color:#242124'><i style='font-style:normal;display:inline-block;transform:translateX(1px) scaleX(1.3)'>-</i><span style='margin-left:2.5px'> markedTextRange</span></div>
<div class='fb' style='top:349.90px'>F</div>
<div class='pi' style='top:352.12px;color:#242124'><i style='font-style:normal;display:inline-block;transform:translateX(1px) scaleX(1.3)'>-</i><span style='margin-left:2.5px'> setMarkedText:selectedRange:</span></div>
<div class='fb' style='top:385.45px'>F</div>
<div class='pi' style='top:387.67px;color:#242124'><i style='font-style:normal;display:inline-block;transform:translateX(1px) scaleX(1.3)'>-</i><span style='margin-left:2.5px'> unmarkText</span></div>
<div class='ph' style='top:423.22px'>Computing Text Ranges and Text Positions</div>
<div class='fb' style='top:456.55px'>F</div>
<div class='pi' style='top:458.77px;color:#242124'><i style='font-style:normal;display:inline-block;transform:translateX(1px) scaleX(1.3)'>-</i><span style='margin-left:2.5px'> textRangeFromPosition:toPosition:</span></div>
<div class='fb' style='top:492.10px'>F</div>
<div class='pi' style='top:494.32px;color:#242124'><i style='font-style:normal;display:inline-block;transform:translateX(1px) scaleX(1.3)'>-</i><span style='margin-left:2.5px'> positionFromPosition:offset:</span></div>
<div class='fb' style='top:527.65px'>F</div>
<div class='pi' style='top:529.87px;color:#242124'><i style='font-style:normal;display:inline-block;transform:translateX(1px) scaleX(1.3)'>-</i><span style='margin-left:2.5px'> positionFromPosition:inDirection:offset:</span></div>
<div class='fb' style='top:563.20px'>F</div>
<div class='pi' style='top:565.42px;color:#242124'><i style='font-style:normal;display:inline-block;transform:translateX(1px) scaleX(1.3)'>-</i><span style='margin-left:2.5px'> beginningOfDocument</span></div>
<div class='fb' style='top:598.75px'>F</div>
<div class='pi' style='top:600.97px;color:#242124'><i style='font-style:normal;display:inline-block;transform:translateX(1px) scaleX(1.3)'>-</i><span style='margin-left:2.5px'> endOfDocument</span></div>
<div class='ph' style='top:636.52px'>Evaluating Text Positions</div>
<div class='fb' style='top:669.85px'>F</div>
<div class='pi' style='top:672.07px;color:#242124'><i style='font-style:normal;display:inline-block;transform:translateX(1px) scaleX(1.3)'>-</i><span style='margin-left:2.5px'> comparePosition:toPosition:</span></div>
<div class='fb' style='top:705.40px'>F</div>
<div class='pi' style='top:707.62px;color:#242124'><i style='font-style:normal;display:inline-block;transform:translateX(1px) scaleX(1.3)'>-</i><span style='margin-left:2.5px'> offsetFromPosition:toPosition:</span></div>
<div class='ph' style='top:743.17px'>Determining Layout and Writing Direction</div>
<div class='fb' style='top:776.50px'>F</div>
<div class='pi' style='top:778.72px;color:#242124'><i style='font-style:normal;display:inline-block;transform:translateX(1px) scaleX(1.3)'>-</i><span style='margin-left:2.5px'> positionWithinRange:farthestInDirection:</span></div>
<div class='fb' style='top:812.05px'>F</div>
<div class='pi' style='top:814.27px;color:#242124'><i style='font-style:normal;display:inline-block;transform:translateX(1px) scaleX(1.3)'>-</i><span style='margin-left:2.5px'> characterRangeByExtendingPosition:inDirection:</span></div>
<div class='fb' style='top:847.60px'>F</div>
<div class='pi' style='top:849.82px;color:#242124'><i style='font-style:normal;display:inline-block;transform:translateX(1px) scaleX(1.3)'>-</i><span style='margin-left:2.5px'> baseWritingDirectionForPosition:inDirection:</span></div>
<div class='fb' style='top:883.15px'>F</div>
<div class='pi' style='top:885.37px;color:#242124'><i style='font-style:normal;display:inline-block;transform:translateX(1px) scaleX(1.3)'>-</i><span style='margin-left:2.5px'> setBaseWritingDirection:forRange:</span></div>
<div class='ph' style='top:920.92px'>Geometry and Hit-Testing Methods</div>
<div class='fb' style='top:954.25px'>F</div>
<div class='pi' style='top:956.47px;color:#242124'><i style='font-style:normal;display:inline-block;transform:translateX(1px) scaleX(1.3)'>-</i><span style='margin-left:2.5px'> firstRectForRange:</span></div>
<div class='fb' style='top:989.80px'>F</div>
<div class='pi' style='top:992.02px;color:#242124'><i style='font-style:normal;display:inline-block;transform:translateX(1px) scaleX(1.3)'>-</i><span style='margin-left:2.5px'> caretRectForPosition:</span></div>
<div class='fb' style='top:1025.35px'>F</div>
<div class='pi' style='top:1027.57px;color:#242124'><i style='font-style:normal;display:inline-block;transform:translateX(1px) scaleX(1.3)'>-</i><span style='margin-left:2.5px'> selectionRectsInLine:range:lineRange:selectedRange:</span></div>
<div class='fb' style='top:1060.90px'>F</div>
<div class='pi' style='top:1063.12px;color:#242124'><i style='font-style:normal;display:inline-block;transform:translateX(1px) scaleX(1.3)'>-</i><span style='margin-left:2.5px'> selectionRectsForRange:</span></div>
<div class='fb' style='top:1096.45px'>F</div>
<div class='pi' style='top:1098.67px;color:#242124'><i style='font-style:normal;display:inline-block;transform:translateX(1px) scaleX(1.3)'>-</i><span style='margin-left:2.5px'> closestPositionToPoint:</span></div>
<div class='fb' style='top:1132.00px'>F</div>
<div class='pi' style='top:1134.22px;color:#242124'><i style='font-style:normal;display:inline-block;transform:translateX(1px) scaleX(1.3)'>-</i><span style='margin-left:2.5px'> closestPositionToPoint:withinRange:</span></div>
<div class='fb' style='top:1167.55px'>F</div>
<div class='pi' style='top:1169.77px;color:#242124'><i style='font-style:normal;display:inline-block;transform:translateX(1px) scaleX(1.3)'>-</i><span style='margin-left:2.5px'> characterRangeAtPoint:</span></div>
<div class='ph' style='top:1205.32px'>Text Input Delegate and TextInput Tokenizer</div>
<div class='fb' style='top:1238.65px'>F</div>
<div class='pi' style='top:1240.87px;color:#242124'><i style='font-style:normal;display:inline-block;transform:translateX(1px) scaleX(1.3)'>-</i><span style='margin-left:2.5px'> tokenizer</span></div>
<div class='ph' style='top:1276.42px'>Returning Text Styling Information</div>
<div class='fb' style='top:1309.75px'>F</div>
<div class='pi' style='top:1311.97px;color:#242124'><i style='font-style:normal;display:inline-block;transform:translateX(1px) scaleX(1.3)'>-</i><span style='margin-left:2.5px'> textStylingAtPosition:inDirection:</span></div>
<div class='ph' style='top:1347.52px'>Reconciling Text Position and Character Offset</div>
<div class='ph' style='top:1383.07px'>Dictation</div>
<div class='fb' style='top:1416.40px'>F</div>
<div class='pi' style='top:1418.62px;color:#242124'><i style='font-style:normal;display:inline-block;transform:translateX(1px) scaleX(1.3)'>-</i><span style='margin-left:2.5px'> dictationRecordingDidEnd</span></div>
<div class='fb' style='top:1451.95px'>F</div>
<div class='pi' style='top:1454.17px;color:#242124'><i style='font-style:normal;display:inline-block;transform:translateX(1px) scaleX(1.3)'>-</i><span style='margin-left:2.5px'> dictationRecognitionFailed</span></div>
<div class='ph' style='top:1489.72px'>Managing the Floating Cursor</div>
<div class='fb' style='top:1523.05px'>F</div>
<div class='pi' style='top:1525.27px;color:#242124'><i style='font-style:normal;display:inline-block;transform:translateX(1px) scaleX(1.3)'>-</i><span style='margin-left:2.5px'> beginFloatingCursorAtPoint:</span></div>
<svg class='a' style='left:1811.5px;top:1565.1px' width='17' height='12' viewBox='0 0 17 12'><path d='M2.2 3.7L8.5 10L14.8 3.7' fill='none' stroke='#1e1e20' stroke-width='2.4' stroke-linecap='round' stroke-linejoin='round'/></svg>
</body></html>
